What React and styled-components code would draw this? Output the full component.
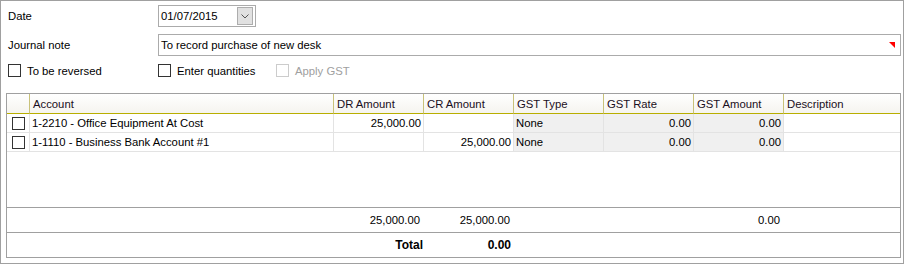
import React from "react";
import styled, { createGlobalStyle } from "styled-components";

const GlobalStyle = createGlobalStyle`
  body {
    margin: 0;
    background: #fff;
    font-family: "Liberation Sans", Arial, sans-serif;
    font-size: 11.3px;
    color: #000;
  }
`;

const COLUMNS = "23px 304px 90px 90px 90px 90px 90px 1fr";

const Window = styled.div`
  width: 904px;
  height: 264px;
  box-sizing: border-box;
  border: 1px solid #a0a0a0;
  padding: 4px 2px 5px 5px;
  display: flex;
  flex-direction: column;
`;

const Form = styled.div`
  display: grid;
  grid-template-columns: 150px 1fr;
  grid-template-rows: 22px 22px 15px;
  row-gap: 7px;
  padding-left: 2px;
  align-items: center;
`;

const Label = styled.div`
  line-height: 22px;
`;

const TextBox = styled.div`
  height: 22px;
  box-sizing: border-box;
  border: 1px solid #ababab;
  display: flex;
  align-items: center;
  padding: 0 5px 0 2px;
  width: ${(p) => p.$width || "auto"};
`;

const DropButton = styled.div`
  margin-left: auto;
  margin-right: -3px;
  width: 16px;
  height: 18px;
  box-sizing: border-box;
  border: 1px solid #adadad;
  background: #e1e1e1;
  display: flex;
  align-items: center;
  justify-content: center;
`;

const NoteFlag = styled.div`
  margin-left: auto;
  width: 0;
  height: 0;
  border-top: 6px solid #ff0000;
  border-left: 6px solid transparent;
`;

const CheckRow = styled.div`
  display: flex;
  align-items: center;
`;

const CheckItem = styled.label`
  display: flex;
  align-items: center;
  gap: 6px;
  width: ${(p) => p.$width || "auto"};
  color: ${(p) => (p.$disabled ? "#a0a0a0" : "#000")};
`;

const Box = styled.span`
  width: 13px;
  height: 13px;
  box-sizing: border-box;
  border: 1px solid ${(p) => (p.$disabled ? "#cccccc" : "#333333")};
  background: #fff;
  flex-shrink: 0;
`;

const GridBox = styled.div`
  margin-top: 15px;
  width: 895px;
  flex: 1;
  box-sizing: border-box;
  border: 1px solid #a0a0a0;
  display: grid;
  grid-template-columns: ${COLUMNS};
  grid-template-rows: 20px 19px 19px 1fr 25px 25px;
`;

const HeadCell = styled.div`
  box-sizing: border-box;
  background: linear-gradient(#ffffff, #f5f4ef);
  border-bottom: 1px solid #b8ae00;
  border-right: ${(p) => (p.$last ? "none" : "1px solid #c9c27a")};
  padding: 0 3px;
  display: flex;
  align-items: center;
  white-space: nowrap;
  color: #1a0f22;
`;

const Cell = styled.div`
  box-sizing: border-box;
  background: ${(p) => (p.$readonly ? "#f0f0f0" : "#fff")};
  border-bottom: 1px solid #e3e3e3;
  border-right: ${(p) => (p.$last ? "none" : "1px solid #e3e3e3")};
  padding: 0 2px;
  display: flex;
  align-items: center;
  justify-content: ${(p) => (p.$right ? "flex-end" : "flex-start")};
  white-space: nowrap;
`;

const CheckCell = styled(Cell)`
  justify-content: center;
  padding: 0;
`;

const Spacer = styled.div`
  grid-column: 1 / -1;
`;

const TotalsRow = styled.div`
  grid-column: 1 / -1;
  display: grid;
  grid-template-columns: ${COLUMNS};
  border-top: 1px solid #a0a0a0;
  font-size: 11.3px;
`;

const TotalCell = styled.div`
  display: flex;
  align-items: center;
  justify-content: flex-end;
  padding-right: ${(p) => p.$pad || "4px"};
  font-weight: ${(p) => (p.$bold ? 700 : 400)};
  font-size: ${(p) => (p.$bold ? "12px" : "inherit")};
`;

const Chevron = () => (
  <svg width="8" height="5" viewBox="0 0 8 5">
    <path d="M0.5 0.5 L4 4 L7.5 0.5" fill="none" stroke="#555" strokeWidth="1" />
  </svg>
);

const headers = [
  "",
  "Account",
  "DR Amount",
  "CR Amount",
  "GST Type",
  "GST Rate",
  "GST Amount",
  "Description",
];

const lines = [
  { account: "1-2210 - Office Equipment At Cost", dr: "25,000.00", cr: "" },
  { account: "1-1110 - Business Bank Account #1", dr: "", cr: "25,000.00" },
];

const JournalLine = ({ line }) => (
  <>
    <CheckCell>
      <Box />
    </CheckCell>
    <Cell>{line.account}</Cell>
    <Cell $right>{line.dr}</Cell>
    <Cell $right>{line.cr}</Cell>
    <Cell $readonly>None</Cell>
    <Cell $readonly $right>0.00</Cell>
    <Cell $readonly $right>0.00</Cell>
    <Cell $last />
  </>
);

export default function App() {
  return (
    <>
      <GlobalStyle />
      <Window>
        <Form>
          <Label>Date</Label>
          <TextBox $width="98px">
            01/07/2015
            <DropButton>
              <Chevron />
            </DropButton>
          </TextBox>

          <Label>Journal note</Label>
          <TextBox>
            To record purchase of new desk
            <NoteFlag />
          </TextBox>

          <CheckItem>
            <Box />
            To be reversed
          </CheckItem>
          <CheckRow>
            <CheckItem $width="118px">
              <Box />
              Enter quantities
            </CheckItem>
            <CheckItem $disabled>
              <Box $disabled />
              Apply GST
            </CheckItem>
          </CheckRow>
        </Form>

        <GridBox>
          {headers.map((h, i) => (
            <HeadCell key={i} $last={i === headers.length - 1}>
              {h}
            </HeadCell>
          ))}
          {lines.map((line, i) => (
            <JournalLine key={i} line={line} />
          ))}
          <Spacer />
          <TotalsRow>
            <div />
            <div />
            <TotalCell>25,000.00</TotalCell>
            <TotalCell>25,000.00</TotalCell>
            <div />
            <div />
            <TotalCell>0.00</TotalCell>
            <div />
          </TotalsRow>
          <TotalsRow>
            <div />
            <div />
            <TotalCell $bold $pad="1px">Total</TotalCell>
            <TotalCell $bold $pad="3px">0.00</TotalCell>
            <div />
            <div />
            <div />
            <div />
          </TotalsRow>
        </GridBox>
      </Window>
    </>
  );
}
